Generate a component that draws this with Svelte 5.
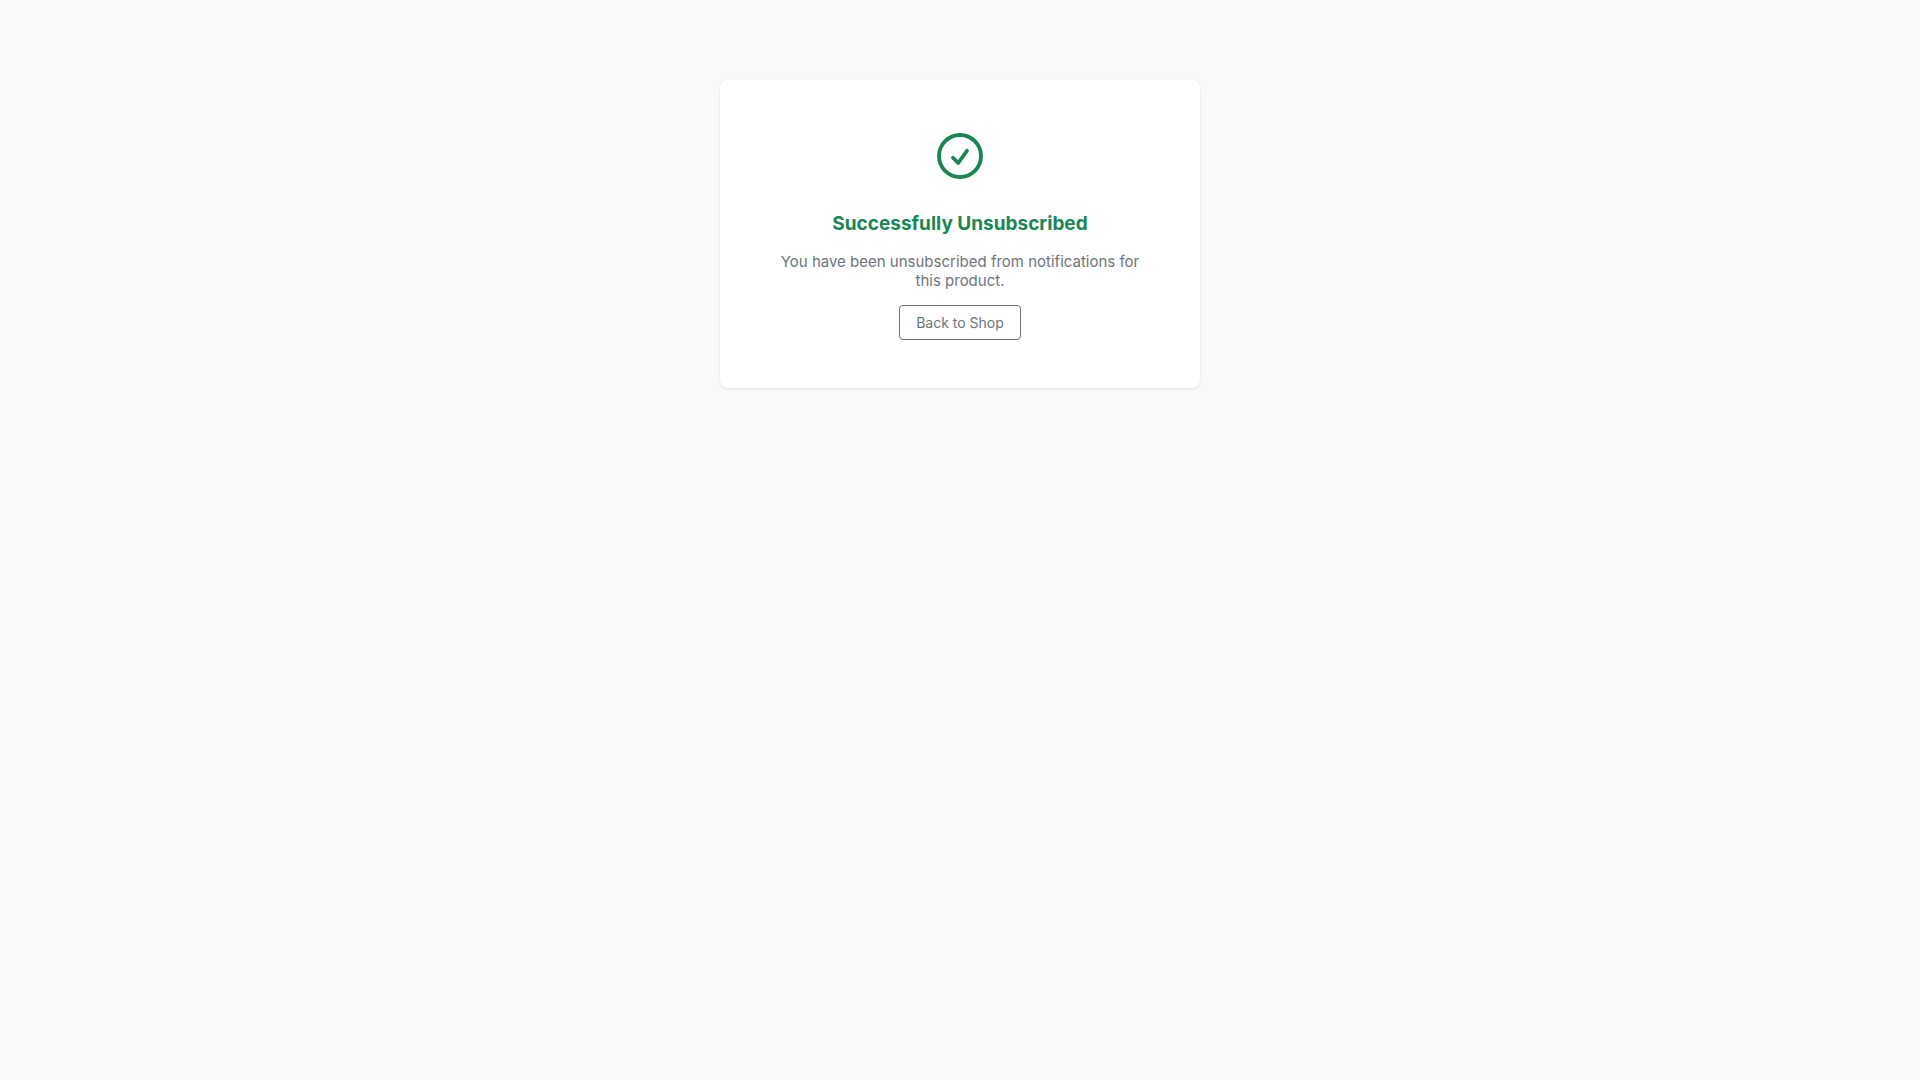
<script lang="ts">
	interface Props {
		title?: string;
		message?: string;
		shopUrl?: string;
	}

	let {
		title = 'Successfully Unsubscribed',
		message = 'You have been unsubscribed from notifications for this product.',
		shopUrl = '/'
	}: Props = $props();
</script>

<main>
	<section class="card">
		<svg
			class="icon"
			viewBox="0 0 24 24"
			fill="none"
			stroke="currentColor"
			stroke-width="1.65"
			stroke-linecap="round"
			stroke-linejoin="round"
			aria-hidden="true"
		>
			<path d="M9 12.75 11.25 15 15 9.75M21 12a9 9 0 1 1-18 0 9 9 0 0 1 18 0Z" />
		</svg>

		<h1>{title}</h1>
		<p>{message}</p>
		<a class="button" href={shopUrl}>Back to Shop</a>
	</section>
</main>

<style>
	:global(body) {
		margin: 0;
		background: #f8f9fb;
		font-family: Inter, sans-serif;
	}

	main {
		padding: 80px 16px;
	}

	.card {
		box-sizing: border-box;
		max-width: 480px;
		margin: 0 auto;
		padding: 48px;
		display: flex;
		flex-direction: column;
		align-items: center;
		border-radius: 8px;
		background: #fff;
		box-shadow: 0 1px 3px rgba(0, 0, 0, 0.1);
		text-align: center;
	}

	.icon {
		width: 56px;
		height: 56px;
		margin-bottom: 28px;
		color: #198754;
	}

	h1 {
		margin: 0 0 16px;
		font-size: 19px;
		line-height: 24px;
		font-weight: 700;
		color: #198754;
	}

	p {
		margin: 0 0 15px;
		padding: 0 8px;
		font-size: 15px;
		line-height: 19px;
		color: #6c757d;
	}

	.button {
		padding: 8px 16px;
		border: 1px solid #6c757d;
		border-radius: 4px;
		font-size: 14px;
		line-height: 17px;
		color: #6c757d;
		text-decoration: none;
	}

	.button:hover {
		background: #6c757d;
		color: #fff;
	}
</style>
